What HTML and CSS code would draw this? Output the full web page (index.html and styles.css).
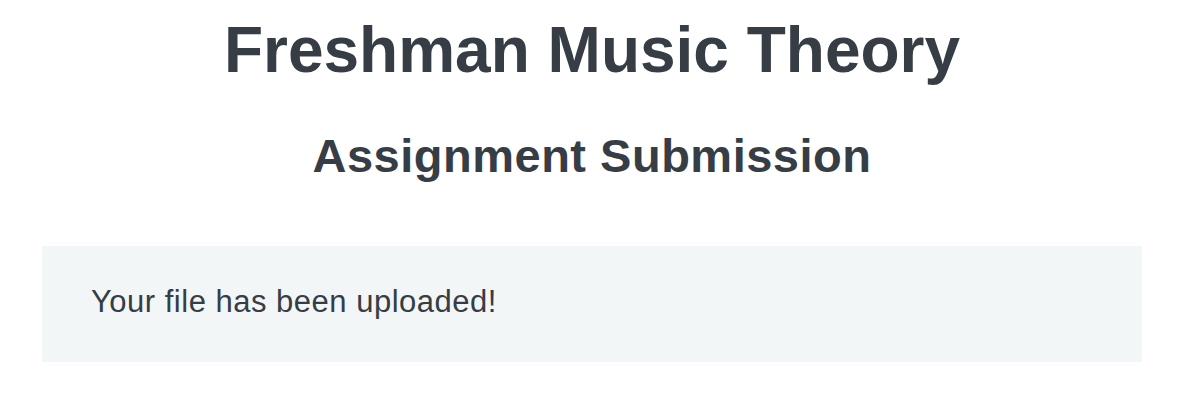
FILE: index.html
```html
<!DOCTYPE html>
<html>
<head>
<meta charset="utf-8">
<link rel="stylesheet" href="styles.css">
</head>
<body>
<div class="page">
  <h1 class="title">Freshman Music Theory</h1>
  <h2 class="subtitle">Assignment Submission</h2>
  <div class="notice">
    <p class="notice-text">Your file has been uploaded!</p>
  </div>
</div>
</body>
</html>
```

FILE: styles.css
```css
html, body {
  margin: 0;
  padding: 0;
  background: #ffffff;
}
.page {
  padding: 0 42px;
  font-family: "Liberation Sans", Arial, sans-serif;
  color: #363d45;
}
.title {
  margin: 0;
  padding-top: 14px;
  text-align: center;
  font-size: 64px;
  line-height: 72px;
  font-weight: bold;
}
.subtitle {
  margin: 0;
  padding-top: 44px;
  text-align: center;
  font-size: 47px;
  line-height: 52px;
  letter-spacing: 0.5px;
  font-weight: bold;
}
.notice {
  margin-top: 64px;
  background: #f3f6f7;
  height: 116px;
  box-sizing: border-box;
  padding: 38px 49px 0;
}
.notice-text {
  margin: 0;
  font-size: 31px;
  line-height: 36px;
  letter-spacing: 0.5px;
}
```
